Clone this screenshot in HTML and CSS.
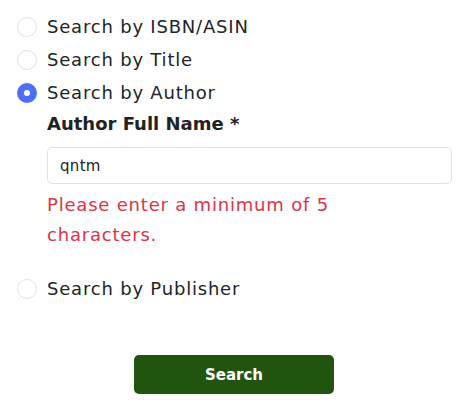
FILE: index.html
```html
<!DOCTYPE html>
<html lang="en">
<head>
<meta charset="utf-8">
<title>Search</title>
<link rel="stylesheet" href="styles.css">
</head>
<body>
<form class="search-form">
  <label class="radio-row"><span class="radio"></span><span class="radio-text">Search by ISBN/ASIN</span></label>
  <label class="radio-row"><span class="radio"></span><span class="radio-text">Search by Title</span></label>
  <label class="radio-row"><span class="radio checked"></span><span class="radio-text">Search by Author</span></label>
  <div class="field">
    <div class="field-label">Author Full Name *</div>
    <div class="input">qntm</div>
    <div class="error">Please enter a minimum of 5 characters.</div>
  </div>
  <label class="radio-row"><span class="radio"></span><span class="radio-text">Search by Publisher</span></label>
  <div class="actions"><button type="button" class="btn">Search</button></div>
</form>
</body>
</html>
```
FILE: styles.css
```css
* { box-sizing: border-box; }
html, body { margin: 0; padding: 0; background: #fff; }
body {
  font-family: "DejaVu Sans", "Open Sans", sans-serif;
  color: #212529;
  width: 461px;
  height: 404px;
  overflow: hidden;
}
.search-form {
  display: flex;
  flex-direction: column;
  padding: 10px 9px 0 17px;
}
.radio-row {
  display: flex;
  align-items: center;
  gap: 10px;
  height: 33px;
  font-size: 18px;
  letter-spacing: 0.8px;
}
.radio {
  width: 20px;
  height: 20px;
  border-radius: 50%;
  border: 1px solid #dee2e6;
  background: #fff;
  flex: none;
}
.radio.checked {
  border: 7px solid #4f6ef7;
}
.field {
  padding-left: 30px;
  display: flex;
  flex-direction: column;
}
.field-label {
  font-weight: 700;
  font-size: 18px;
  line-height: 27px;
  margin-top: 1px;
  color: #222;
}
.input {
  margin-top: 10px;
  height: 37px;
  border: 1px solid #dee2e6;
  border-radius: 5px;
  padding: 0 12px;
  font-size: 15px;
  letter-spacing: 0.3px;
  display: flex;
  align-items: center;
  color: #212529;
}
.error {
  margin-top: 6px;
  max-width: 360px;
  color: #dc3545;
  font-size: 18px;
  line-height: 30px;
  letter-spacing: 0.8px;
}
.field + .radio-row { margin-top: 22px; }
.actions {
  display: flex;
  padding-left: 117px;
  margin-top: 50px;
}
.btn {
  width: 200px;
  height: 39px;
  border: none;
  border-radius: 5px;
  background: #21550f;
  color: #fff;
  font-family: "DejaVu Sans", "Open Sans", sans-serif;
  font-weight: 700;
  font-size: 15px;
}
```
